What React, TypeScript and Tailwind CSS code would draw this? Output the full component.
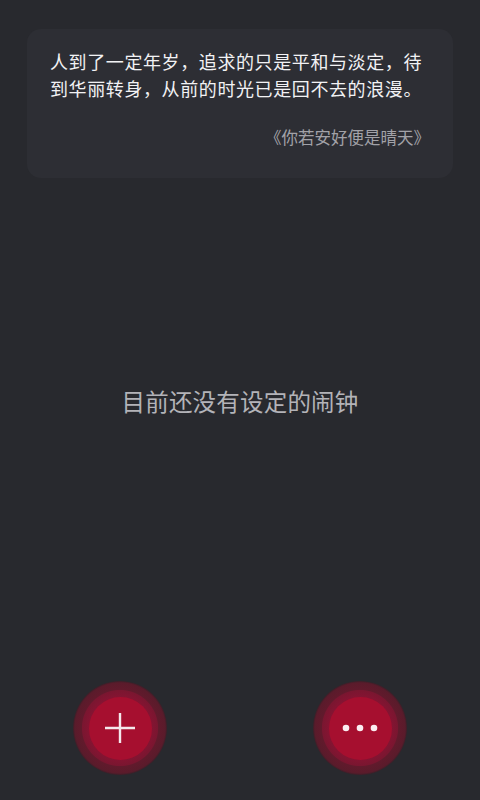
import React from "react";

const font = { fontFamily: '"Noto Sans CJK SC", "Noto Sans", sans-serif' };

function Fab({ children }: { children: React.ReactNode }) {
  return (
    <div className="w-[94px] h-[94px] rounded-full flex items-center justify-center bg-[radial-gradient(circle_closest-side,#851432_66%,#7a1630_80%,#611a2c_82%,#5a1b2b_96%,#3a1f28_100%)]">
      <div className="w-[63px] h-[63px] rounded-full bg-[#a60f2f] flex items-center justify-center">
        {children}
      </div>
    </div>
  );
}

export default function App() {
  return (
    <div className="w-[480px] h-[800px] bg-[#28292e] flex flex-col" style={font}>
      <div className="mx-[27px] mt-[29px] rounded-[14px] bg-[#2d2e34] px-[23px] pt-[19px] pb-[30px]">
        <p className="text-[18px] leading-[27px] tracking-[0.6px] text-[#f2f2f4]">
          人到了一定年岁，追求的只是平和与淡定，待到华丽转身，从前的时光已是回不去的浪漫。
        </p>
        <p className="mt-[24px] text-right text-[16.5px] leading-[22px] text-[#a2a2a8]">
          《你若安好便是晴天》
        </p>
      </div>
      <div className="flex-1 flex items-center justify-center pb-[56px]">
        <span className="text-[23.5px] text-[#b3b3b8] tracking-[0.2px]">目前还没有设定的闹钟</span>
      </div>
      <div className="flex justify-between px-[73px] pb-[25px]">
        <Fab>
          <svg width="34" height="34" viewBox="0 0 34 34">
            <path d="M17 2 V32 M2 17 H32" stroke="#f4e8ec" strokeWidth="2.4" />
          </svg>
        </Fab>
        <Fab>
          <svg width="36" height="10" viewBox="0 0 36 10">
            <circle cx="4" cy="5" r="3.3" fill="#fbeef2" />
            <circle cx="18" cy="5" r="3.3" fill="#fbeef2" />
            <circle cx="32" cy="5" r="3.3" fill="#fbeef2" />
          </svg>
        </Fab>
      </div>
    </div>
  );
}
